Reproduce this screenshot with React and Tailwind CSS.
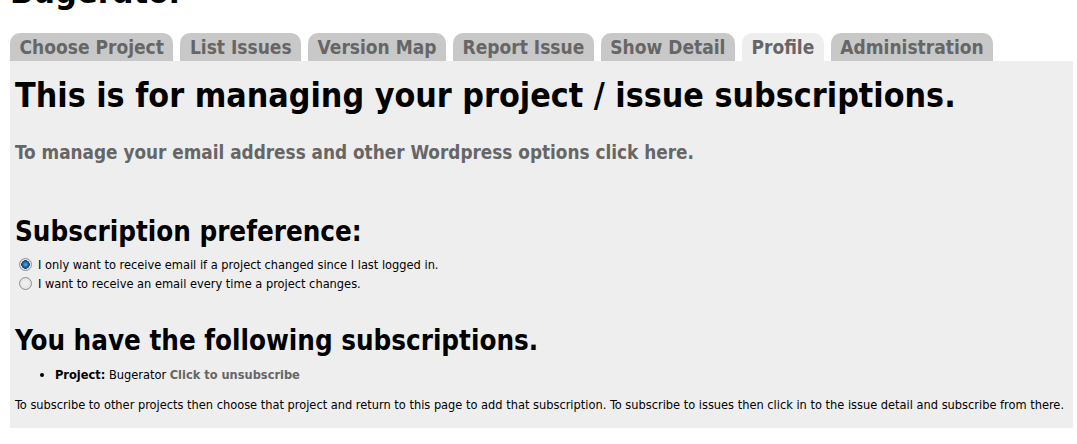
import { useState } from 'react'

const tabs = [
  'Choose Project',
  'List Issues',
  'Version Map',
  'Report Issue',
  'Show Detail',
  'Profile',
  'Administration',
]

const Radio = ({ checked, onChange }) => (
  <input
    type="radio"
    name="pref"
    checked={checked}
    onChange={onChange}
    className="appearance-none m-0 ml-[4px] w-[13px] h-[13px] rounded-full border border-[#8e8f8f] bg-[radial-gradient(circle,#f4f4f4_0px,#dcdcdc_100%)] checked:bg-[radial-gradient(circle,#5aa8e0_0px,#1b5d96_3px,#0e3c66_4px,#e8e8e8_4.5px,#d6d6d6_100%)]"
  />
)

export default function App() {
  const [pref, setPref] = useState('login')
  const active = 'Profile'

  return (
    <div className="bg-white min-h-screen text-black" style={{ fontFamily: '"DejaVu Sans Condensed", "DejaVu Sans", Verdana, sans-serif' }}>
      {/* Site title, scrolled mostly out of view */}
      <h1 className="text-[34px] font-bold leading-none px-[10px] -mt-[26px] h-[34px]">Bugerator</h1>

      {/* Tabs */}
      <div className="flex items-end gap-[7px] pl-[10px] mt-[25px] h-[28px]">
        {tabs.map(tab => (
          <a
            key={tab}
            href="#"
            className={`h-[28px] px-[9.5px] rounded-t-[10px] text-[19px] font-bold leading-[28px] text-[#666] ${
              tab === active ? 'bg-[#eeeeee]' : 'bg-[#c8c8c8]'
            }`}
          >
            {tab}
          </a>
        ))}
      </div>

      {/* Panel */}
      <div className="ml-[10px] mr-[4px] bg-[#eeeeee] px-[5px] pt-[15px] pb-[14px]">
        <h1 className="text-[33.7px] font-bold leading-[40px]">
          This is for managing your project / issue subscriptions.
        </h1>
        <a href="#" className="block mt-[25px] text-[18.8px] font-bold text-[#666] leading-[24px]">
          To manage your email address and other Wordpress options click here.
        </a>

        <h2 className="mt-[50px] text-[27.5px] font-bold leading-[32px]">Subscription preference:</h2>
        <div className="mt-[8px] text-[12.7px] leading-[19px]">
          <label className="flex items-center gap-[6px]">
            <Radio checked={pref === 'login'} onChange={() => setPref('login')} />
            I only want to receive email if a project changed since I last logged in.
          </label>
          <label className="flex items-center gap-[6px]">
            <Radio checked={pref === 'every'} onChange={() => setPref('every')} />
            I want to receive an email every time a project changes.
          </label>
        </div>

        <h2 className="mt-[31px] text-[27.5px] font-bold leading-[32px]">You have the following subscriptions.</h2>
        <ul className="mt-[10px] text-[12.7px] leading-[18px] list-disc pl-[40px]">
          <li>
            <b>Project:</b> Bugerator{' '}
            <a href="#" className="font-bold text-[#666]">Click to unsubscribe</a>
          </li>
        </ul>
        <p className="mt-[12px] text-[12.7px] leading-[18px]">
          To subscribe to other projects then choose that project and return to this page to add that subscription. To subscribe to issues then click in to the issue detail and subscribe from there.
        </p>
      </div>
    </div>
  )
}
